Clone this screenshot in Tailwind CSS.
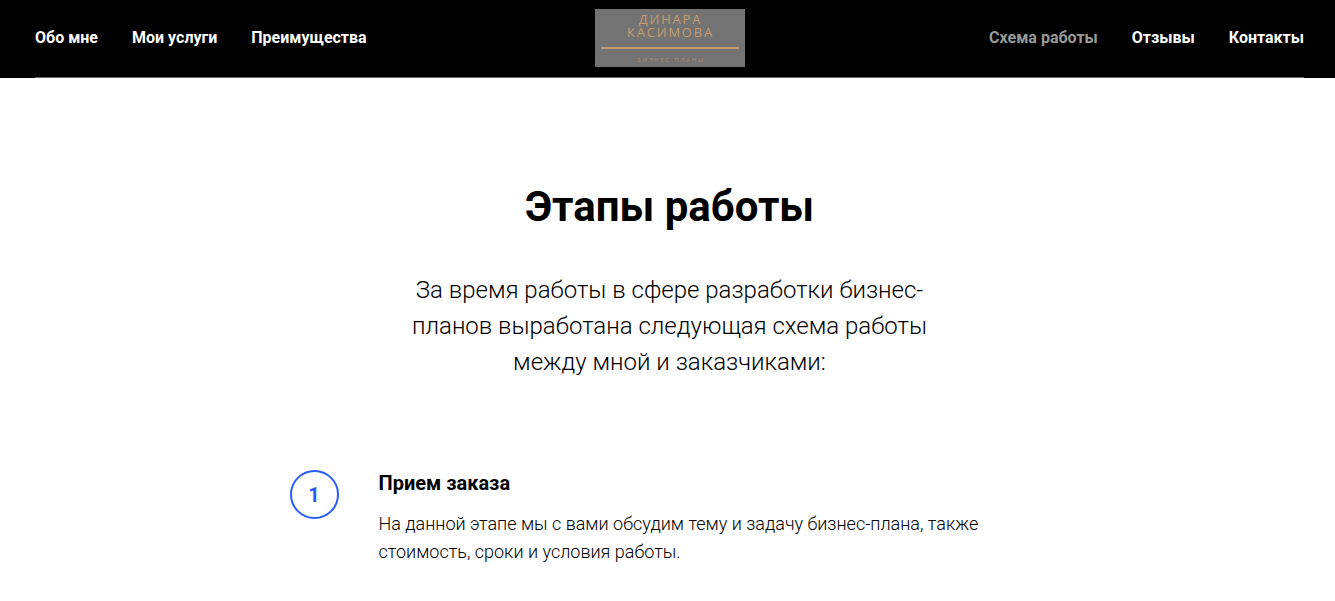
<!DOCTYPE html>
<html lang="ru">
  <head>
    <meta charset="UTF-8" />
    <meta name="viewport" content="width=device-width, initial-scale=1.0" />
    <title>Этапы работы</title>
    <script src="https://cdn.jsdelivr.net/npm/@tailwindcss/browser@4"></script>
  </head>

  <body class="bg-white font-['Roboto',sans-serif] h-[601px] overflow-hidden">
    <header class="bg-black h-[78px] pl-[35px] pr-[31px]">
      <nav class="h-[78px] pb-[1px] flex items-center justify-between border-b border-[#666] text-white text-[16px] font-bold">
        <ul class="flex gap-[34px] w-[400px]">
          <li>Обо мне</li>
          <li>Мои услуги</li>
          <li>Преимущества</li>
        </ul>
        <div class="w-[150px] h-[58px] bg-[#737373] flex flex-col items-center text-[#c69c6d] font-['Open_Sans',sans-serif] font-normal">
          <div class="mt-[4px] pl-[2px] text-[13px] leading-[13px] tracking-[1.8px] text-center">ДИНАРА<br />КАСИМОВА</div>
          <div class="w-[138px] h-[2px] bg-[#c69c6d] mt-[8px]"></div>
          <div class="mt-[8px] pl-[3px] text-[6px] leading-[7px] tracking-[1.7px] text-[#b08d66]">БИЗНЕС-ПЛАНЫ</div>
        </div>
        <ul class="flex gap-[34px] w-[400px] justify-end">
          <li class="text-[#999]">Схема работы</li>
          <li>Отзывы</li>
          <li>Контакты</li>
        </ul>
      </nav>
    </header>

    <main class="flex flex-col items-center pl-[4px]">
      <h1 class="mt-[102px] text-[42px] leading-[54px] font-bold text-black">Этапы работы</h1>
      <p class="mt-[38px] w-[540px] text-center text-[24px] leading-[36px] font-light text-black">
        За время работы в сфере разработки бизнес-<br />планов выработана следующая схема работы<br />между мной и заказчиками:
      </p>
      <section class="mt-[70px] w-[755px] flex ml-[-5px]">
        <div class="w-[49px] h-[49px] shrink-0 mt-[20px] rounded-full border-2 border-[#2b5cff] text-[#2b5cff] flex items-center justify-center text-[20px] font-bold">1</div>
        <div class="ml-[40px] pt-[19px]">
          <h3 class="text-[20px] leading-[28px] font-bold text-black">Прием заказа</h3>
          <p class="mt-[13px] text-[18px] leading-[28px] font-light text-black w-[620px]">
            На данной этапе мы с вами обсудим тему и задачу бизнес-плана, также<br />стоимость, сроки и условия работы.
          </p>
        </div>
      </section>
    </main>
  </body>
</html>
